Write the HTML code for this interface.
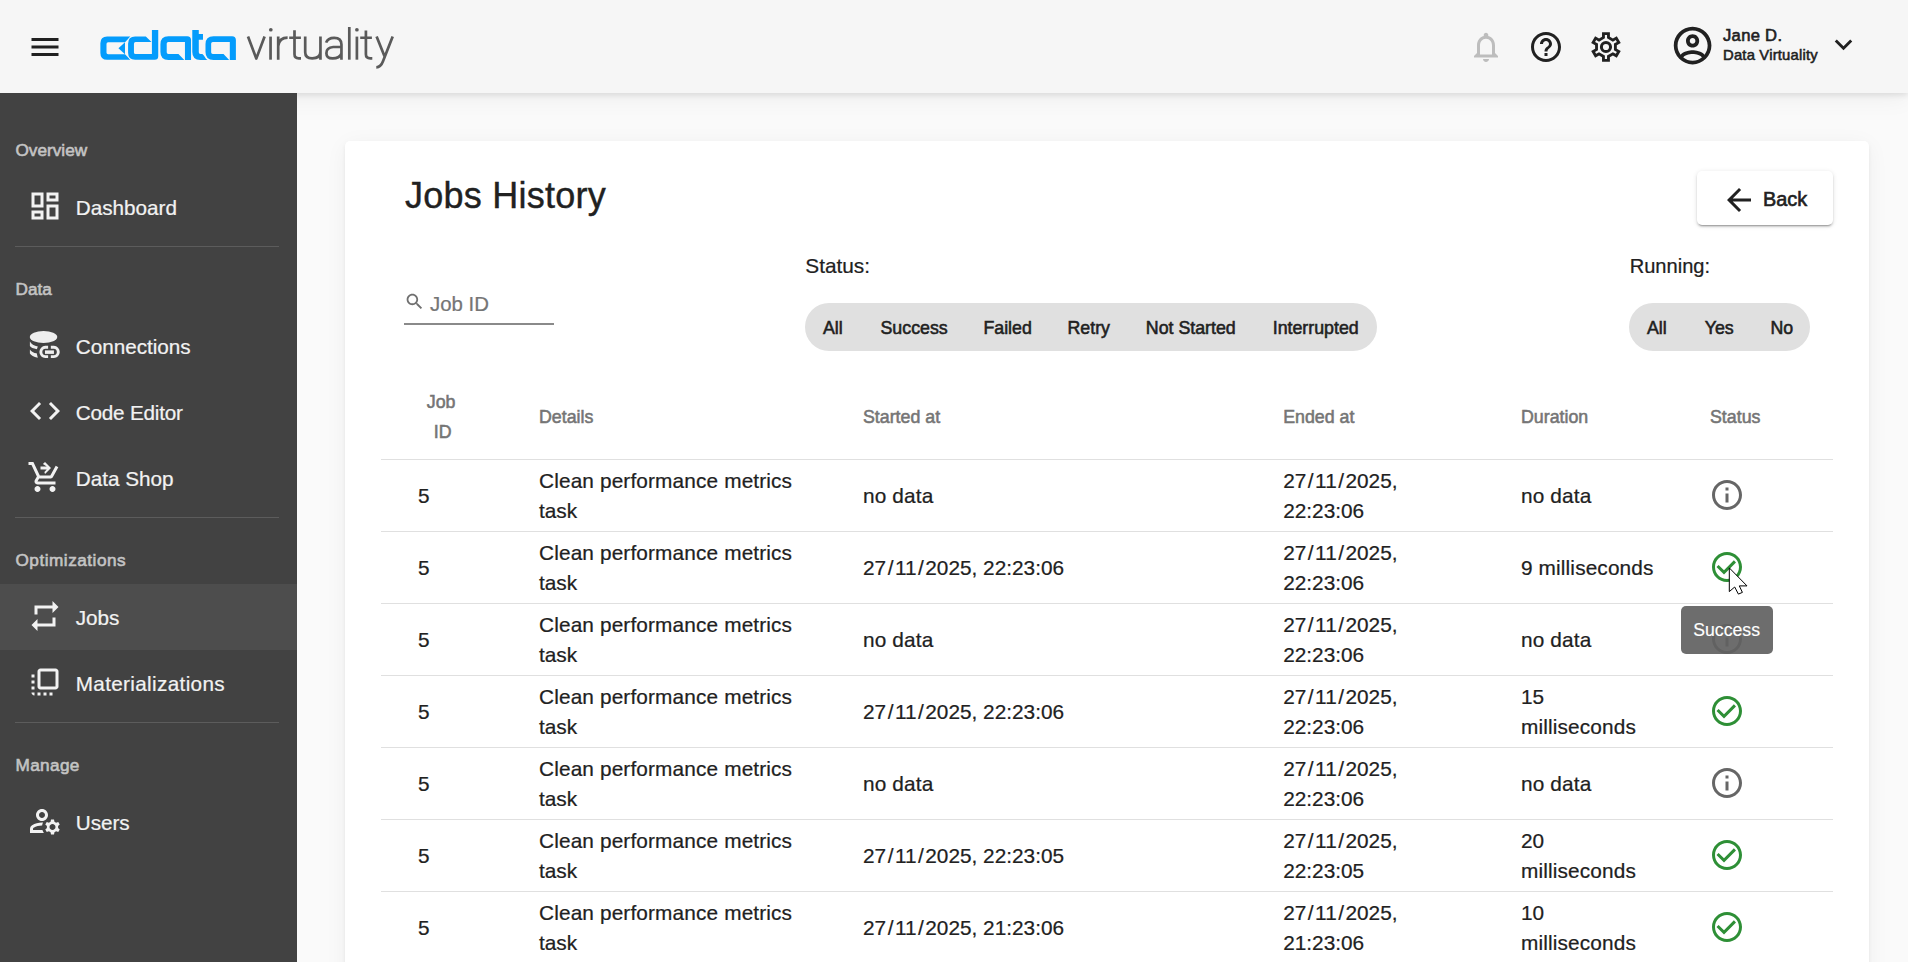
<!DOCTYPE html>
<html><head><meta charset="utf-8"><style>
*{margin:0;padding:0;box-sizing:border-box}
html,body{width:1908px;height:962px;overflow:hidden;background:#fafafa;font-family:"Liberation Sans",sans-serif;color:#212121;position:relative}
.t{position:absolute;white-space:nowrap;z-index:5}
.ic{position:absolute;z-index:5;overflow:visible}
.bx{position:absolute}
</style></head><body>
<div class="bx" style="left:0;top:0;width:1908px;height:93px;background:#f6f6f6;z-index:3;box-shadow:0 2px 6px rgba(0,0,0,.10),0 6px 22px rgba(0,0,0,.05)"></div>
<div class="bx" style="left:0;top:93px;width:297px;height:869px;background:#424242;z-index:4"></div>
<div class="bx" style="left:345px;top:141px;width:1524px;height:880px;background:#fff;border-radius:5px;z-index:1;box-shadow:0 2px 4px rgba(0,0,0,.06),0 4px 22px rgba(0,0,0,.05)"></div>
<svg class="ic" style="left:27.00px;top:29.00px;" width="36" height="36" viewBox="0 0 24 24"><path fill="#212121" d="M3 18h18v-2H3v2zm0-5h18v-2H3v2zm0-7v2h18V6H3z"/></svg>
<svg class="ic" style="left:0;top:0" width="260" height="93" viewBox="0 0 260 93">
<g fill="#049cfc">
<path d="M130.4,36.45 L107.2,36.45 Q100.37,36.45 100.37,43.3 L100.37,52.9 Q100.37,59.75 107.2,59.75 L130.4,59.75 L125.0,54.13 L108.1,54.13 Q106.49,54.13 106.49,52.5 L106.49,43.9 Q106.49,42.29 108.1,42.29 L125.0,42.29 Z"/>
<path d="M125.0,42.29 L118.43,48.37 L125.0,54.13 Z"/>
</g>
<g fill="#049cfc" stroke="#f6f6f6" stroke-width="1.4" style="paint-order:stroke">
<path d="M151.92,29.95 L158.24,29.95 L158.24,56.2 Q158.24,59.75 154.7,59.75 L135.1,59.75 Q128.1,59.75 128.1,52.75 L128.1,43.45 Q128.1,36.45 135.1,36.45 L145.8,36.45 L151.5,42.1 L135.6,42.1 Q133.95,42.1 133.95,43.7 L133.95,52.5 Q133.95,54.05 135.6,54.05 L151.92,54.05 Z"/>
</g>
<g fill="#049cfc">
<path d="M160.42,44.3 Q160.42,36.27 168.4,36.27 L187.2,36.27 Q191.03,36.27 191.03,40.1 L191.03,59.96 L184.95,59.96 L184.95,41.93 L168.3,41.93 Q166.71,41.93 166.71,43.5 L166.71,52.3 Q166.71,53.88 168.3,53.88 L178.45,53.88 L184.32,59.96 L168.4,59.96 Q160.42,59.96 160.42,52 Z"/>
<path d="M192.28,29.98 L198.78,29.98 L198.78,33.97 L202.98,33.97 L202.98,39.84 L198.78,39.84 L198.78,52.3 Q198.78,53.88 200.4,53.88 L202.35,53.88 L208.22,59.96 L200.3,59.96 Q192.28,59.96 192.28,52 Z"/>
</g>
<g fill="#049cfc" stroke="#f6f6f6" stroke-width="3.4" style="paint-order:stroke">
<path d="M205.49,44.3 Q205.49,36.27 213.5,36.27 L232.06,36.27 Q235.89,36.27 235.89,40.1 L235.89,59.96 L229.81,59.96 L229.81,41.93 L212.8,41.93 Q211.15,41.93 211.15,43.5 L211.15,52.3 Q211.15,53.88 212.8,53.88 L223.52,53.88 L229.18,59.96 L213.5,59.96 Q205.49,59.96 205.49,52 Z"/>
</g>
</svg>
<svg class="ic" style="left:0;top:0" width="420" height="93" viewBox="0 0 420 93"><g fill="none" stroke="#5a5a5a" stroke-width="2.7" stroke-linejoin="round">
<path d="M248.0,36.47 L256.3,58.6 L264.6,36.47"/>
<path d="M270.55,36.6 L270.55,59.68"/>
<path d="M278.2,36.6 L278.2,59.68 M278.2,46 Q279.4,37.7 287.6,37.7"/>
<path d="M294.5,30.24 L294.5,54.3 Q294.5,58.4 298.8,58.4 L301,58.4 M289.2,37.75 L300.9,37.75"/>
<path d="M305.2,36.6 L305.2,52.2 Q305.2,58.3 312.2,58.3 Q320.45,58.3 320.45,51.5 M320.45,36.6 L320.45,59.68"/>
<path d="M326.1,42.6 Q327.8,37.8 334.2,37.8 Q341.45,37.8 341.45,44.5 L341.45,59.68 M341.45,47.0 L333.2,47.0 Q326.4,47.4 326.4,53.2 Q326.4,58.4 332.6,58.4 Q339.4,58.4 341.45,53.6"/>
<path d="M349.3,27.0 L349.3,59.68"/>
<path d="M356.9,36.6 L356.9,59.68"/>
<path d="M365.9,30.49 L365.9,54.3 Q365.9,58.4 370.2,58.4 L372.3,58.4 M360.2,37.75 L371.9,37.75"/>
<path d="M376.6,36.6 L384.6,56.4 M392.7,36.6 L383.0,61.3 Q380.8,67.2 376.3,67.3"/>
</g><g fill="#5a5a5a"><circle cx="270.8" cy="29.74" r="1.85"/><circle cx="356.9" cy="29.74" r="1.85"/></g></svg>
<svg class="ic" style="left:1468.00px;top:29.00px;" width="36" height="36" viewBox="0 0 24 24"><path fill="#bdbdbd" d="M12 22c1.1 0 2-.9 2-2h-4c0 1.1.9 2 2 2zm6-6v-5c0-3.07-1.63-5.64-4.5-6.32V4c0-.83-.67-1.5-1.5-1.5s-1.5.67-1.5 1.5v.68C7.64 5.36 6 7.92 6 11v5l-2 2v1h16v-1l-2-2zm-2 1H8v-6c0-2.48 1.51-4.5 4-4.5s4 2.02 4 4.5v6z"/></svg>
<svg class="ic" style="left:1528.00px;top:29.00px;" width="36" height="36" viewBox="0 0 24 24"><path fill="#212121" d="M11 18h2v-2h-2v2zm1-16C6.48 2 2 6.48 2 12s4.48 10 10 10 10-4.48 10-10S17.52 2 12 2zm0 18c-4.41 0-8-3.59-8-8s3.59-8 8-8 8 3.59 8 8-3.59 8-8 8zm0-14c-2.21 0-4 1.79-4 4h2c0-1.1.9-2 2-2s2 .9 2 2c0 2-3 1.75-3 5h2c0-2.25 3-2.5 3-5 0-2.21-1.79-4-4-4z"/></svg>
<svg class="ic" style="left:0;top:0" width="1908" height="93" viewBox="0 0 1908 93"><path fill="#212121" fill-rule="evenodd" d="M1602.03,32.16 L1602.03,36.70 L1599.04,38.43 L1595.11,36.16 L1591.18,42.96 L1595.11,45.23 L1595.11,48.69 L1591.18,50.96 L1595.11,57.76 L1599.04,55.49 L1602.03,57.22 L1602.03,61.76 L1609.89,61.76 L1609.89,57.22 L1612.88,55.49 L1616.81,57.76 L1620.74,50.96 L1616.81,48.69 L1616.81,45.23 L1620.74,42.96 L1616.81,36.16 L1612.88,38.43 L1609.89,36.70 L1609.89,32.16 Z M1604.88,35.01 L1604.88,38.35 L1599.04,41.72 L1596.15,40.05 L1595.07,41.92 L1597.96,43.59 L1597.96,50.33 L1595.07,52.00 L1596.15,53.87 L1599.04,52.20 L1604.88,55.57 L1604.88,58.91 L1607.04,58.91 L1607.04,55.57 L1612.88,52.20 L1615.77,53.87 L1616.85,52.00 L1613.96,50.33 L1613.96,43.59 L1616.85,41.92 L1615.77,40.05 L1612.88,41.72 L1607.04,38.35 L1607.04,35.01 Z"/><circle cx="1605.96" cy="46.96" r="4.58" fill="none" stroke="#212121" stroke-width="3.0"/></svg>
<svg class="ic" style="left:1670.20px;top:22.80px;" width="45.2" height="45.2" viewBox="0 0 24 24"><path fill="#212121" d="M12 2C6.48 2 2 6.48 2 12s4.48 10 10 10 10-4.48 10-10S17.52 2 12 2zM7.07 18.28c.43-.9 3.05-1.78 4.93-1.78s4.51.88 4.93 1.78C15.57 19.36 13.86 20 12 20s-3.57-.64-4.93-1.72zm11.29-1.45c-1.43-1.74-4.9-2.33-6.36-2.33s-4.93.59-6.36 2.33C4.62 15.49 4 13.82 4 12c0-4.41 3.59-8 8-8s8 3.59 8 8c0 1.82-.62 3.49-1.64 4.83zM12 6c-1.94 0-3.5 1.56-3.5 3.5S10.06 13 12 13s3.5-1.56 3.5-3.5S13.94 6 12 6zm0 5c-.83 0-1.5-.67-1.5-1.5S11.17 8 12 8s1.5.67 1.5 1.5S12.83 11 12 11z"/></svg>
<div class="t" style="left:1723.00px;top:27.65px;font-size:16.6px;line-height:16.6px;color:#212121;-webkit-text-stroke:0.6px #212121;letter-spacing:0.3px;">Jane D.</div>
<div class="t" style="left:1723.00px;top:48.17px;font-size:14.8px;line-height:14.8px;color:#212121;-webkit-text-stroke:0.55px #212121;letter-spacing:0.2px;">Data Virtuality</div>
<svg class="ic" style="left:1826.00px;top:27.00px;" width="35" height="35" viewBox="0 0 24 24"><path fill="#212121" d="M16.59 8.59L12 13.17 7.41 8.59 6 10l6 6 6-6z"/></svg>
<div class="t" style="left:15.50px;top:141.64px;font-size:17.2px;line-height:17.2px;color:#c4c4c4;-webkit-text-stroke:0.6px #c4c4c4;letter-spacing:0px;">Overview</div>
<svg class="ic" style="left:27.00px;top:188.00px;" width="36" height="36" viewBox="0 0 24 24"><path fill="#f2f2f2" d="M19 5v2h-4V5h4M9 5v6H5V5h4m10 8v6h-4v-6h4M9 17v2H5v-2h4M21 3h-8v6h8V3zM11 3H3v10h8V3zm10 8h-8v10h8V11zm-10 4H3v6h8v-6z"/></svg>
<div class="t" style="left:75.70px;top:197.88px;font-size:20.7px;line-height:20.7px;color:#f2f2f2;-webkit-text-stroke:0.22px #f2f2f2;letter-spacing:0px;">Dashboard</div>
<div class="bx" style="left:15px;top:245.5px;width:264px;height:1px;background:#5c5c5c;z-index:5"></div>
<div class="t" style="left:15.50px;top:280.94px;font-size:17.2px;line-height:17.2px;color:#c4c4c4;-webkit-text-stroke:0.6px #c4c4c4;letter-spacing:0px;">Data</div>
<div class="t" style="left:75.70px;top:337.18px;font-size:20.7px;line-height:20.7px;color:#f2f2f2;-webkit-text-stroke:0.22px #f2f2f2;letter-spacing:0px;">Connections</div>
<svg class="ic" style="left:0;top:0" width="297" height="400" viewBox="0 0 297 400"><g fill="#eeeeee">
<ellipse cx="43.54" cy="336.9" rx="13.7" ry="6.0"/>
<path d="M29.9,341.6 Q32,345.6 37.8,346.6 L36.9,349.3 Q31.2,348.3 29.9,346.1 Z"/>
<path d="M29.9,349.4 Q32,352.6 36.7,353.3 L37.8,357.7 Q31.5,356.5 29.9,353.6 Z"/>
<rect x="45" y="350.4" width="8.94" height="3.5"/></g>
<g fill="none" stroke="#eeeeee" stroke-width="2.9">
<path d="M48.12,347.28 L45.32,347.28 A4.69,4.69 0 0 0 45.32,356.65 L48.12,356.65"/>
<path d="M50.82,347.28 L53.83,347.28 A4.69,4.69 0 0 1 53.83,356.65 L50.82,356.65"/>
</g></svg>
<svg class="ic" style="left:27.00px;top:393.30px;" width="36" height="36" viewBox="0 0 24 24"><path fill="#f2f2f2" d="M9.4 16.6L4.8 12l4.6-4.6L8 6l-6 6 6 6 1.4-1.4zm5.2 0l4.6-4.6-4.6-4.6L16 6l6 6-6 6-1.4-1.4z"/></svg>
<div class="t" style="left:75.70px;top:403.18px;font-size:20.7px;line-height:20.7px;color:#f2f2f2;-webkit-text-stroke:0.22px #f2f2f2;letter-spacing:-0.2px;">Code Editor</div>
<svg class="ic" style="left:27.00px;top:459.30px;" width="36" height="36" viewBox="0 0 24 24"><path fill="#f2f2f2" d="M15.55 13c.75 0 1.41-.41 1.75-1.03l3.58-6.49-1.75-.97-3.58 6.49H8.53L4.27 2H1v2h2l3.6 7.59-1.35 2.44C4.52 15.37 5.48 17 7 17h12v-2H7l1.1-2h7.45zM7 18c-1.1 0-1.99.9-1.99 2S5.9 22 7 22s2-.9 2-2-.9-2-2-2zm10 0c-1.1 0-1.99.9-1.99 2s.89 2 1.99 2 2-.9 2-2-.9-2-2-2zm-4.99-8l3.99-4-3.99-4-1.42 1.41L13.17 5H9v2h4.17l-1.59 1.59L12.01 10z"/></svg>
<div class="t" style="left:75.70px;top:469.18px;font-size:20.7px;line-height:20.7px;color:#f2f2f2;-webkit-text-stroke:0.22px #f2f2f2;letter-spacing:0px;">Data Shop</div>
<div class="bx" style="left:15px;top:516.5px;width:264px;height:1px;background:#5c5c5c;z-index:5"></div>
<div class="t" style="left:15.50px;top:551.74px;font-size:17.2px;line-height:17.2px;color:#c4c4c4;-webkit-text-stroke:0.6px #c4c4c4;letter-spacing:0.5px;">Optimizations</div>
<div class="bx" style="left:0;top:584px;width:297px;height:66px;background:#4d4d4d;z-index:4"></div>
<svg class="ic" style="left:27.00px;top:598.00px;" width="36" height="36" viewBox="0 0 24 24"><path fill="#f2f2f2" d="M7 7h10v3l4-4-4-4v3H5v6h2V7zm10 10H7v-3l-4 4 4 4v-3h12v-6h-2v4z"/></svg>
<div class="t" style="left:75.70px;top:607.88px;font-size:20.7px;line-height:20.7px;color:#f2f2f2;-webkit-text-stroke:0.22px #f2f2f2;letter-spacing:0px;">Jobs</div>
<svg class="ic" style="left:27.00px;top:664.00px;" width="36" height="36" viewBox="0 0 24 24"><path fill="#f2f2f2" d="M3 13h2v-2H3v2zm0 4h2v-2H3v2zm2 4v-2H3c0 1.1.89 2 2 2zM3 9h2V7H3v2zm12 12h2v-2h-2v2zm4-18H9c-1.11 0-2 .9-2 2v10c0 1.1.89 2 2 2h10c1.1 0 2-.9 2-2V5c0-1.1-.9-2-2-2zm0 12H9V5h10v10zm-8 6h2v-2h-2v2zm-4 0h2v-2H7v2z"/></svg>
<div class="t" style="left:75.70px;top:673.88px;font-size:20.7px;line-height:20.7px;color:#f2f2f2;-webkit-text-stroke:0.22px #f2f2f2;letter-spacing:0.35px;">Materializations</div>
<div class="bx" style="left:15px;top:721.5px;width:264px;height:1px;background:#5c5c5c;z-index:5"></div>
<div class="t" style="left:15.50px;top:757.14px;font-size:17.2px;line-height:17.2px;color:#c4c4c4;-webkit-text-stroke:0.6px #c4c4c4;letter-spacing:0.35px;">Manage</div>
<svg class="ic" style="left:27.00px;top:803.00px;" width="36" height="36" viewBox="0 0 24 24"><path fill="#f2f2f2" d="M4 18v-.65c0-.34.16-.66.41-.81C6.1 15.53 8.03 15 10 15c.03 0 .05 0 .08.01.1-.7.3-1.37.59-1.98-.22-.02-.44-.03-.67-.03-2.42 0-4.68.67-6.61 1.82-.88.52-1.39 1.5-1.39 2.53V20h9.26c-.42-.6-.75-1.28-.97-2H4zM10 12c2.21 0 4-1.79 4-4s-1.79-4-4-4-4 1.79-4 4 1.79 4 4 4zm0-6c1.1 0 2 .9 2 2s-.9 2-2 2-2-.9-2-2 .9-2 2-2zM20.75 16c0-.22-.03-.42-.06-.63l1.14-1.01-1-1.73-1.45.49c-.32-.27-.68-.48-1.08-.63L18 11h-2l-.3 1.49c-.4.15-.76.36-1.08.63l-1.45-.49-1 1.73 1.14 1.01c-.03.21-.06.41-.06.63s.03.42.06.63l-1.14 1.01 1 1.73 1.45-.49c.32.27.68.48 1.08.63L16 21h2l.3-1.49c.4-.15.76-.36 1.08-.63l1.45.49 1-1.73-1.14-1.01c.03-.21.06-.41.06-.63zM17 18c-1.1 0-2-.9-2-2s.9-2 2-2 2 .9 2 2-.9 2-2 2z"/></svg>
<div class="t" style="left:75.70px;top:812.88px;font-size:20.7px;line-height:20.7px;color:#f2f2f2;-webkit-text-stroke:0.22px #f2f2f2;letter-spacing:0px;">Users</div>
<div class="t" style="left:405.00px;top:177.93px;font-size:36.0px;line-height:36.0px;color:#212121;-webkit-text-stroke:0.4px #212121;letter-spacing:0.25px;">Jobs History</div>
<div class="bx" style="left:1697px;top:171px;width:136px;height:54px;background:#fff;border-radius:5px;z-index:2;box-shadow:0 3px 1px -2px rgba(0,0,0,.2),0 2px 2px 0 rgba(0,0,0,.14),0 1px 5px 0 rgba(0,0,0,.12)"></div>
<svg class="ic" style="left:1721.00px;top:182.40px;" width="36" height="36" viewBox="0 0 24 24"><path fill="#212121" d="M20 11H7.83l5.59-5.59L12 4l-8 8 8 8 1.41-1.41L7.83 13H20v-2z"/></svg>
<div class="t" style="left:1763.00px;top:189.65px;font-size:19.9px;line-height:19.9px;color:#212121;-webkit-text-stroke:0.6px #212121;">Back</div>
<svg class="ic" style="left:403.50px;top:291.00px;" width="21.2" height="21.2" viewBox="0 0 24 24"><path fill="#6f6f6f" d="M15.5 14h-.79l-.28-.27C15.41 12.59 16 11.11 16 9.5 16 5.91 13.09 3 9.5 3S3 5.91 3 9.5 5.91 16 9.5 16c1.61 0 3.09-.59 4.23-1.57l.27.28v.79l5 4.99L20.49 19l-4.99-5zm-6 0C7.01 14 5 11.99 5 9.5S7.01 5 9.5 5 14 7.01 14 9.5 11.99 14 9.5 14z"/></svg>
<div class="t" style="left:430.00px;top:294.43px;font-size:20.4px;line-height:20.4px;color:#757575;-webkit-text-stroke:0.22px #757575;">Job ID</div>
<div class="bx" style="left:404px;top:322.9px;width:150px;height:2px;background:#8a8a8a;z-index:2"></div>
<div class="t" style="left:805.30px;top:255.89px;font-size:20.8px;line-height:20.8px;color:#212121;-webkit-text-stroke:0.22px #212121;">Status:</div>
<div class="bx" style="left:805px;top:303px;width:572px;height:48px;border-radius:24px;background:#e0e0e0;z-index:2"></div>
<div class="t" style="left:823.00px;top:319.73px;font-size:17.8px;line-height:17.8px;color:#212121;-webkit-text-stroke:0.55px #212121;">All</div>
<div class="t" style="left:880.50px;top:319.73px;font-size:17.8px;line-height:17.8px;color:#212121;-webkit-text-stroke:0.55px #212121;">Success</div>
<div class="t" style="left:983.40px;top:319.73px;font-size:17.8px;line-height:17.8px;color:#212121;-webkit-text-stroke:0.55px #212121;">Failed</div>
<div class="t" style="left:1067.50px;top:319.73px;font-size:17.8px;line-height:17.8px;color:#212121;-webkit-text-stroke:0.55px #212121;">Retry</div>
<div class="t" style="left:1145.80px;top:319.73px;font-size:17.8px;line-height:17.8px;color:#212121;-webkit-text-stroke:0.55px #212121;">Not Started</div>
<div class="t" style="left:1272.70px;top:319.73px;font-size:17.8px;line-height:17.8px;color:#212121;-webkit-text-stroke:0.55px #212121;">Interrupted</div>
<div class="t" style="left:1629.70px;top:256.29px;font-size:20.1px;line-height:20.1px;color:#212121;-webkit-text-stroke:0.22px #212121;">Running:</div>
<div class="bx" style="left:1629px;top:303px;width:181px;height:48px;border-radius:24px;background:#e0e0e0;z-index:2"></div>
<div class="t" style="left:1646.90px;top:319.73px;font-size:17.8px;line-height:17.8px;color:#212121;-webkit-text-stroke:0.55px #212121;">All</div>
<div class="t" style="left:1704.70px;top:319.73px;font-size:17.8px;line-height:17.8px;color:#212121;-webkit-text-stroke:0.55px #212121;">Yes</div>
<div class="t" style="left:1770.40px;top:319.73px;font-size:17.8px;line-height:17.8px;color:#212121;-webkit-text-stroke:0.55px #212121;">No</div>
<div class="t" style="left:426.80px;top:394.43px;font-size:17.8px;line-height:17.8px;color:#757575;-webkit-text-stroke:0.55px #757575;">Job</div>
<div class="t" style="left:433.70px;top:424.23px;font-size:17.8px;line-height:17.8px;color:#757575;-webkit-text-stroke:0.55px #757575;">ID</div>
<div class="t" style="left:539.00px;top:409.33px;font-size:17.8px;line-height:17.8px;color:#757575;-webkit-text-stroke:0.55px #757575;">Details</div>
<div class="t" style="left:863.00px;top:409.33px;font-size:17.8px;line-height:17.8px;color:#757575;-webkit-text-stroke:0.55px #757575;">Started at</div>
<div class="t" style="left:1283.20px;top:409.33px;font-size:17.8px;line-height:17.8px;color:#757575;-webkit-text-stroke:0.55px #757575;">Ended at</div>
<div class="t" style="left:1521.00px;top:409.33px;font-size:17.8px;line-height:17.8px;color:#757575;-webkit-text-stroke:0.55px #757575;">Duration</div>
<div class="t" style="left:1710.00px;top:409.33px;font-size:17.8px;line-height:17.8px;color:#757575;-webkit-text-stroke:0.55px #757575;">Status</div>
<div class="bx" style="left:381px;top:458.5px;width:1452px;height:1px;background:#e0e0e0;z-index:2"></div>
<div class="t" style="left:418.00px;top:485.89px;font-size:20.8px;line-height:20.8px;color:#212121;-webkit-text-stroke:0.22px #212121;">5</div>
<div class="t" style="left:539.00px;top:471.19px;font-size:20.8px;line-height:20.8px;color:#212121;-webkit-text-stroke:0.22px #212121;letter-spacing:0.14px;">Clean performance metrics</div>
<div class="t" style="left:539.00px;top:501.19px;font-size:20.8px;line-height:20.8px;color:#212121;-webkit-text-stroke:0.22px #212121;">task</div>
<div class="t" style="left:863.00px;top:485.89px;font-size:20.8px;line-height:20.8px;color:#212121;-webkit-text-stroke:0.22px #212121;letter-spacing:0.14px;">no data</div>
<div class="t" style="left:1283.20px;top:471.19px;font-size:20.8px;line-height:20.8px;color:#212121;-webkit-text-stroke:0.22px #212121;">27<span style="margin:0 1.5px">/</span>11<span style="margin:0 1.5px">/</span>2025,</div>
<div class="t" style="left:1283.20px;top:501.19px;font-size:20.8px;line-height:20.8px;color:#212121;-webkit-text-stroke:0.22px #212121;">22:23:06</div>
<div class="t" style="left:1521.00px;top:485.89px;font-size:20.8px;line-height:20.8px;color:#212121;-webkit-text-stroke:0.22px #212121;letter-spacing:0.14px;">no data</div>
<svg class="ic" style="left:1709.00px;top:477.00px;" width="36" height="36" viewBox="0 0 24 24"><path fill="#666666" d="M11 7h2v2h-2zm0 4h2v6h-2zm1-9C6.48 2 2 6.48 2 12s4.48 10 10 10 10-4.48 10-10S17.52 2 12 2zm0 18c-4.41 0-8-3.59-8-8s3.59-8 8-8 8 3.59 8 8-3.59 8-8 8z"/></svg>
<div class="bx" style="left:381px;top:530.5px;width:1452px;height:1px;background:#e0e0e0;z-index:2"></div>
<div class="t" style="left:418.00px;top:557.89px;font-size:20.8px;line-height:20.8px;color:#212121;-webkit-text-stroke:0.22px #212121;">5</div>
<div class="t" style="left:539.00px;top:543.19px;font-size:20.8px;line-height:20.8px;color:#212121;-webkit-text-stroke:0.22px #212121;letter-spacing:0.14px;">Clean performance metrics</div>
<div class="t" style="left:539.00px;top:573.19px;font-size:20.8px;line-height:20.8px;color:#212121;-webkit-text-stroke:0.22px #212121;">task</div>
<div class="t" style="left:863.00px;top:557.89px;font-size:20.8px;line-height:20.8px;color:#212121;-webkit-text-stroke:0.22px #212121;">27<span style="margin:0 1.5px">/</span>11<span style="margin:0 1.5px">/</span>2025, 22:23:06</div>
<div class="t" style="left:1283.20px;top:543.19px;font-size:20.8px;line-height:20.8px;color:#212121;-webkit-text-stroke:0.22px #212121;">27<span style="margin:0 1.5px">/</span>11<span style="margin:0 1.5px">/</span>2025,</div>
<div class="t" style="left:1283.20px;top:573.19px;font-size:20.8px;line-height:20.8px;color:#212121;-webkit-text-stroke:0.22px #212121;">22:23:06</div>
<div class="t" style="left:1521.00px;top:557.89px;font-size:20.8px;line-height:20.8px;color:#212121;-webkit-text-stroke:0.22px #212121;letter-spacing:0.14px;">9 milliseconds</div>
<svg class="ic" style="left:1709.00px;top:548.50px;" width="36" height="36" viewBox="0 0 24 24"><path fill="#2e8f36" d="M16.59 7.58L10 14.17l-3.59-3.58L5 12l5 5 8-8zM12 2C6.48 2 2 6.48 2 12s4.48 10 10 10 10-4.48 10-10S17.52 2 12 2zm0 18c-4.42 0-8-3.58-8-8s3.58-8 8-8 8 3.58 8 8-3.58 8-8 8z"/></svg>
<div class="bx" style="left:381px;top:602.5px;width:1452px;height:1px;background:#e0e0e0;z-index:2"></div>
<div class="t" style="left:418.00px;top:629.89px;font-size:20.8px;line-height:20.8px;color:#212121;-webkit-text-stroke:0.22px #212121;">5</div>
<div class="t" style="left:539.00px;top:615.19px;font-size:20.8px;line-height:20.8px;color:#212121;-webkit-text-stroke:0.22px #212121;letter-spacing:0.14px;">Clean performance metrics</div>
<div class="t" style="left:539.00px;top:645.19px;font-size:20.8px;line-height:20.8px;color:#212121;-webkit-text-stroke:0.22px #212121;">task</div>
<div class="t" style="left:863.00px;top:629.89px;font-size:20.8px;line-height:20.8px;color:#212121;-webkit-text-stroke:0.22px #212121;letter-spacing:0.14px;">no data</div>
<div class="t" style="left:1283.20px;top:615.19px;font-size:20.8px;line-height:20.8px;color:#212121;-webkit-text-stroke:0.22px #212121;">27<span style="margin:0 1.5px">/</span>11<span style="margin:0 1.5px">/</span>2025,</div>
<div class="t" style="left:1283.20px;top:645.19px;font-size:20.8px;line-height:20.8px;color:#212121;-webkit-text-stroke:0.22px #212121;">22:23:06</div>
<div class="t" style="left:1521.00px;top:629.89px;font-size:20.8px;line-height:20.8px;color:#212121;-webkit-text-stroke:0.22px #212121;letter-spacing:0.14px;">no data</div>
<svg class="ic" style="left:1709.00px;top:621.00px;" width="36" height="36" viewBox="0 0 24 24"><path fill="#666666" d="M11 7h2v2h-2zm0 4h2v6h-2zm1-9C6.48 2 2 6.48 2 12s4.48 10 10 10 10-4.48 10-10S17.52 2 12 2zm0 18c-4.41 0-8-3.59-8-8s3.59-8 8-8 8 3.59 8 8-3.59 8-8 8z"/></svg>
<div class="bx" style="left:381px;top:674.5px;width:1452px;height:1px;background:#e0e0e0;z-index:2"></div>
<div class="t" style="left:418.00px;top:701.89px;font-size:20.8px;line-height:20.8px;color:#212121;-webkit-text-stroke:0.22px #212121;">5</div>
<div class="t" style="left:539.00px;top:687.19px;font-size:20.8px;line-height:20.8px;color:#212121;-webkit-text-stroke:0.22px #212121;letter-spacing:0.14px;">Clean performance metrics</div>
<div class="t" style="left:539.00px;top:717.19px;font-size:20.8px;line-height:20.8px;color:#212121;-webkit-text-stroke:0.22px #212121;">task</div>
<div class="t" style="left:863.00px;top:701.89px;font-size:20.8px;line-height:20.8px;color:#212121;-webkit-text-stroke:0.22px #212121;">27<span style="margin:0 1.5px">/</span>11<span style="margin:0 1.5px">/</span>2025, 22:23:06</div>
<div class="t" style="left:1283.20px;top:687.19px;font-size:20.8px;line-height:20.8px;color:#212121;-webkit-text-stroke:0.22px #212121;">27<span style="margin:0 1.5px">/</span>11<span style="margin:0 1.5px">/</span>2025,</div>
<div class="t" style="left:1283.20px;top:717.19px;font-size:20.8px;line-height:20.8px;color:#212121;-webkit-text-stroke:0.22px #212121;">22:23:06</div>
<div class="t" style="left:1521.00px;top:687.19px;font-size:20.8px;line-height:20.8px;color:#212121;-webkit-text-stroke:0.22px #212121;">15</div>
<div class="t" style="left:1521.00px;top:717.19px;font-size:20.8px;line-height:20.8px;color:#212121;-webkit-text-stroke:0.22px #212121;letter-spacing:0.14px;">milliseconds</div>
<svg class="ic" style="left:1709.00px;top:692.50px;" width="36" height="36" viewBox="0 0 24 24"><path fill="#2e8f36" d="M16.59 7.58L10 14.17l-3.59-3.58L5 12l5 5 8-8zM12 2C6.48 2 2 6.48 2 12s4.48 10 10 10 10-4.48 10-10S17.52 2 12 2zm0 18c-4.42 0-8-3.58-8-8s3.58-8 8-8 8 3.58 8 8-3.58 8-8 8z"/></svg>
<div class="bx" style="left:381px;top:746.5px;width:1452px;height:1px;background:#e0e0e0;z-index:2"></div>
<div class="t" style="left:418.00px;top:773.89px;font-size:20.8px;line-height:20.8px;color:#212121;-webkit-text-stroke:0.22px #212121;">5</div>
<div class="t" style="left:539.00px;top:759.19px;font-size:20.8px;line-height:20.8px;color:#212121;-webkit-text-stroke:0.22px #212121;letter-spacing:0.14px;">Clean performance metrics</div>
<div class="t" style="left:539.00px;top:789.19px;font-size:20.8px;line-height:20.8px;color:#212121;-webkit-text-stroke:0.22px #212121;">task</div>
<div class="t" style="left:863.00px;top:773.89px;font-size:20.8px;line-height:20.8px;color:#212121;-webkit-text-stroke:0.22px #212121;letter-spacing:0.14px;">no data</div>
<div class="t" style="left:1283.20px;top:759.19px;font-size:20.8px;line-height:20.8px;color:#212121;-webkit-text-stroke:0.22px #212121;">27<span style="margin:0 1.5px">/</span>11<span style="margin:0 1.5px">/</span>2025,</div>
<div class="t" style="left:1283.20px;top:789.19px;font-size:20.8px;line-height:20.8px;color:#212121;-webkit-text-stroke:0.22px #212121;">22:23:06</div>
<div class="t" style="left:1521.00px;top:773.89px;font-size:20.8px;line-height:20.8px;color:#212121;-webkit-text-stroke:0.22px #212121;letter-spacing:0.14px;">no data</div>
<svg class="ic" style="left:1709.00px;top:765.00px;" width="36" height="36" viewBox="0 0 24 24"><path fill="#666666" d="M11 7h2v2h-2zm0 4h2v6h-2zm1-9C6.48 2 2 6.48 2 12s4.48 10 10 10 10-4.48 10-10S17.52 2 12 2zm0 18c-4.41 0-8-3.59-8-8s3.59-8 8-8 8 3.59 8 8-3.59 8-8 8z"/></svg>
<div class="bx" style="left:381px;top:818.5px;width:1452px;height:1px;background:#e0e0e0;z-index:2"></div>
<div class="t" style="left:418.00px;top:845.89px;font-size:20.8px;line-height:20.8px;color:#212121;-webkit-text-stroke:0.22px #212121;">5</div>
<div class="t" style="left:539.00px;top:831.19px;font-size:20.8px;line-height:20.8px;color:#212121;-webkit-text-stroke:0.22px #212121;letter-spacing:0.14px;">Clean performance metrics</div>
<div class="t" style="left:539.00px;top:861.19px;font-size:20.8px;line-height:20.8px;color:#212121;-webkit-text-stroke:0.22px #212121;">task</div>
<div class="t" style="left:863.00px;top:845.89px;font-size:20.8px;line-height:20.8px;color:#212121;-webkit-text-stroke:0.22px #212121;">27<span style="margin:0 1.5px">/</span>11<span style="margin:0 1.5px">/</span>2025, 22:23:05</div>
<div class="t" style="left:1283.20px;top:831.19px;font-size:20.8px;line-height:20.8px;color:#212121;-webkit-text-stroke:0.22px #212121;">27<span style="margin:0 1.5px">/</span>11<span style="margin:0 1.5px">/</span>2025,</div>
<div class="t" style="left:1283.20px;top:861.19px;font-size:20.8px;line-height:20.8px;color:#212121;-webkit-text-stroke:0.22px #212121;">22:23:05</div>
<div class="t" style="left:1521.00px;top:831.19px;font-size:20.8px;line-height:20.8px;color:#212121;-webkit-text-stroke:0.22px #212121;">20</div>
<div class="t" style="left:1521.00px;top:861.19px;font-size:20.8px;line-height:20.8px;color:#212121;-webkit-text-stroke:0.22px #212121;letter-spacing:0.14px;">milliseconds</div>
<svg class="ic" style="left:1709.00px;top:836.50px;" width="36" height="36" viewBox="0 0 24 24"><path fill="#2e8f36" d="M16.59 7.58L10 14.17l-3.59-3.58L5 12l5 5 8-8zM12 2C6.48 2 2 6.48 2 12s4.48 10 10 10 10-4.48 10-10S17.52 2 12 2zm0 18c-4.42 0-8-3.58-8-8s3.58-8 8-8 8 3.58 8 8-3.58 8-8 8z"/></svg>
<div class="bx" style="left:381px;top:890.5px;width:1452px;height:1px;background:#e0e0e0;z-index:2"></div>
<div class="t" style="left:418.00px;top:917.89px;font-size:20.8px;line-height:20.8px;color:#212121;-webkit-text-stroke:0.22px #212121;">5</div>
<div class="t" style="left:539.00px;top:903.19px;font-size:20.8px;line-height:20.8px;color:#212121;-webkit-text-stroke:0.22px #212121;letter-spacing:0.14px;">Clean performance metrics</div>
<div class="t" style="left:539.00px;top:933.19px;font-size:20.8px;line-height:20.8px;color:#212121;-webkit-text-stroke:0.22px #212121;">task</div>
<div class="t" style="left:863.00px;top:917.89px;font-size:20.8px;line-height:20.8px;color:#212121;-webkit-text-stroke:0.22px #212121;">27<span style="margin:0 1.5px">/</span>11<span style="margin:0 1.5px">/</span>2025, 21:23:06</div>
<div class="t" style="left:1283.20px;top:903.19px;font-size:20.8px;line-height:20.8px;color:#212121;-webkit-text-stroke:0.22px #212121;">27<span style="margin:0 1.5px">/</span>11<span style="margin:0 1.5px">/</span>2025,</div>
<div class="t" style="left:1283.20px;top:933.19px;font-size:20.8px;line-height:20.8px;color:#212121;-webkit-text-stroke:0.22px #212121;">21:23:06</div>
<div class="t" style="left:1521.00px;top:903.19px;font-size:20.8px;line-height:20.8px;color:#212121;-webkit-text-stroke:0.22px #212121;">10</div>
<div class="t" style="left:1521.00px;top:933.19px;font-size:20.8px;line-height:20.8px;color:#212121;-webkit-text-stroke:0.22px #212121;letter-spacing:0.14px;">milliseconds</div>
<svg class="ic" style="left:1709.00px;top:908.50px;" width="36" height="36" viewBox="0 0 24 24"><path fill="#2e8f36" d="M16.59 7.58L10 14.17l-3.59-3.58L5 12l5 5 8-8zM12 2C6.48 2 2 6.48 2 12s4.48 10 10 10 10-4.48 10-10S17.52 2 12 2zm0 18c-4.42 0-8-3.58-8-8s3.58-8 8-8 8 3.58 8 8-3.58 8-8 8z"/></svg>
<div class="bx" style="left:381px;top:962.5px;width:1452px;height:1px;background:#e0e0e0;z-index:2"></div>
<div class="bx" style="left:1681px;top:606.4px;width:92px;height:47.6px;border-radius:5px;background:rgba(97,97,97,.92);z-index:8"></div>
<div class="t" style="left:1693.30px;top:621.96px;font-size:17.65px;line-height:17.65px;color:#ffffff;-webkit-text-stroke:0.15px #ffffff;z-index:9;">Success</div>
<svg class="ic" style="left:0;top:0;z-index:10" width="1908" height="962" viewBox="0 0 1908 962"><path d="M1729.3,567.9 L1729.3,591.6 L1734.7,587 L1738.4,594.1 L1742.4,592.4 L1739.3,585.9 L1747,585.9 Z" fill="#fff" stroke="#000" stroke-width="1" stroke-linejoin="round"/></svg>
</body></html>
